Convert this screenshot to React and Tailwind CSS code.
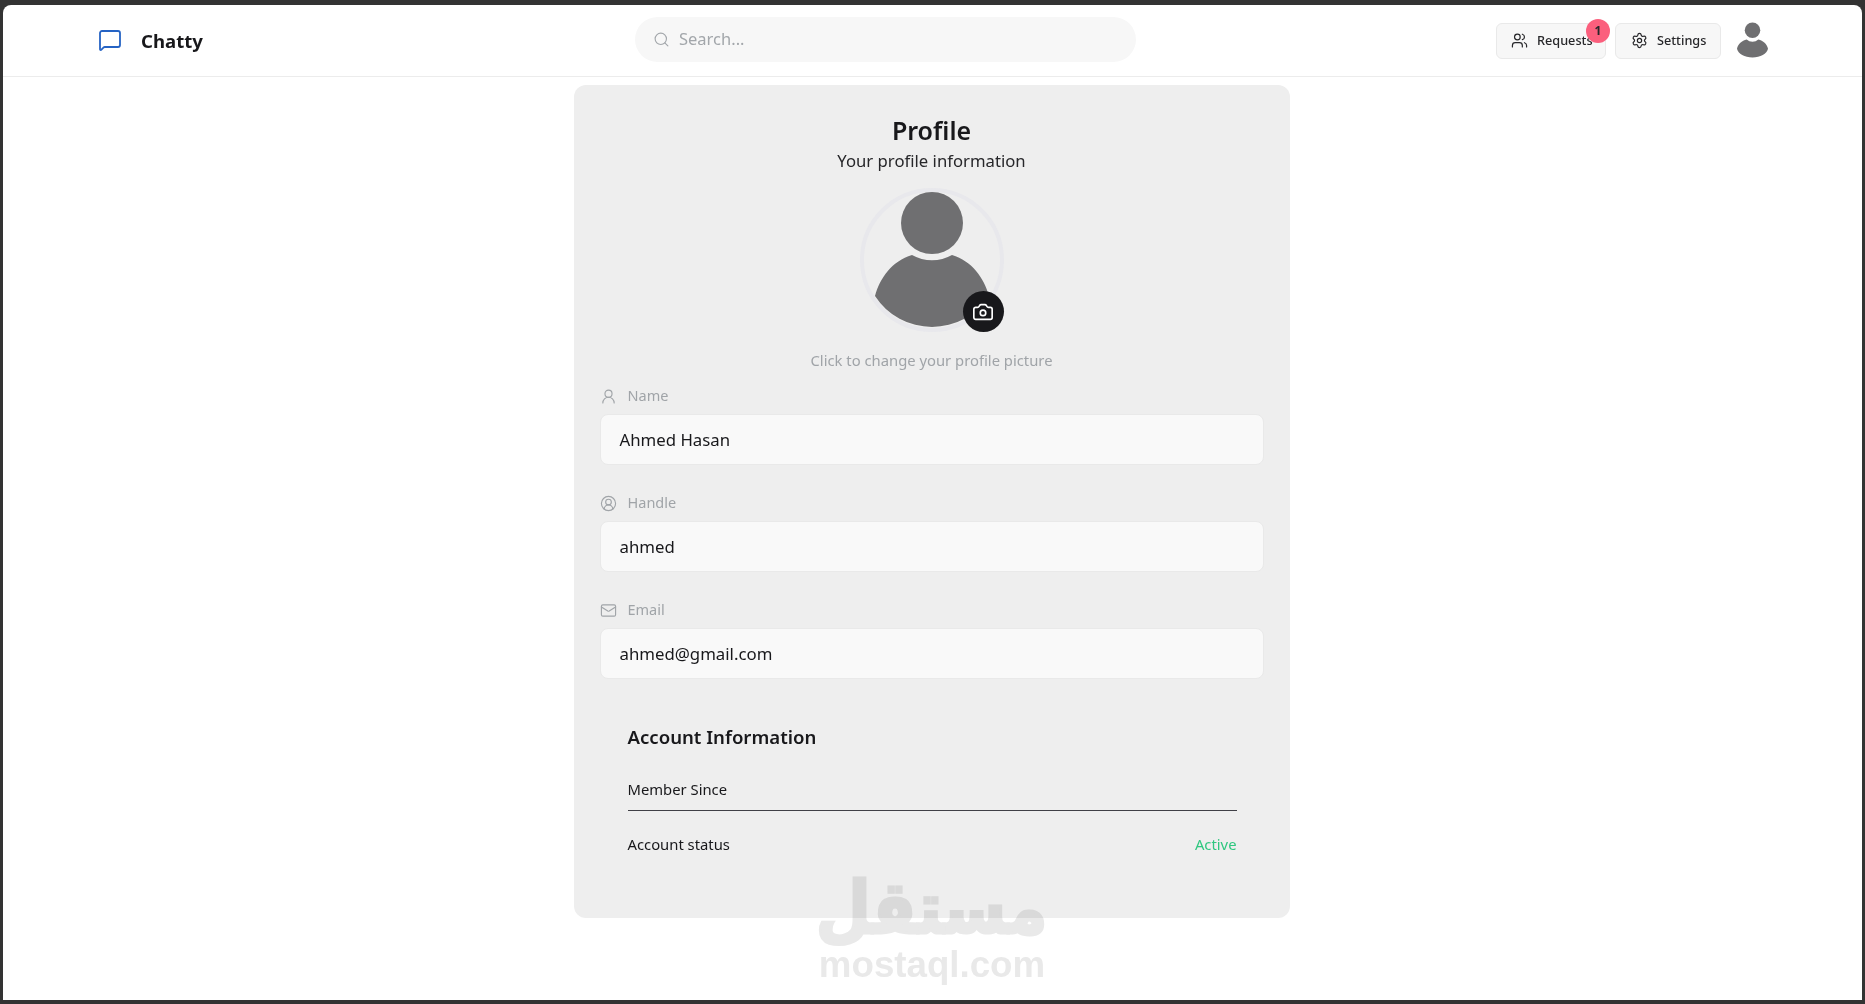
import React from 'react';
import { Camera, CircleUserRound, Mail, MessageSquare, Search, Settings, UserRound, Users } from 'lucide-react';

const PersonIcon = ({ className }) => (
  <svg className={className} viewBox="0 0 144 144" fill="#6f6f71">
    <circle cx="72" cy="35" r="31" />
    <path d="M52 67A41 41 0 0 0 92 67C112 73 124 90 129 108A68 68 0 0 1 15 108C20 90 32 73 52 67Z" />
  </svg>
);

const Field = ({ icon: Icon, label, value, className }) => (
  <div className={className}>
    <div className="flex items-center gap-[11px] h-5 text-[14.5px] text-[#a0a4a8]">
      <Icon className="w-[17px] h-[17px]" strokeWidth={1.6} />
      <span>{label}</span>
    </div>
    <div className="mt-[8px] h-[51px] flex items-center px-[19px] rounded-lg bg-[#f9f9f9] border border-[#e9e9e9] text-[16.8px] text-[#18181b]">
      {value}
    </div>
  </div>
);

const App = () => {
  return (
    <div className="relative h-screen overflow-hidden bg-[#333333] pt-[5px] px-[3px] pb-[4px] font-['Noto_Sans','Open_Sans',sans-serif]">
      <div className="h-full bg-white rounded-t-lg flex flex-col">
        <header className="h-[72px] shrink-0 flex items-center border-b border-[#ececec]">
          <div className="w-[632px] flex items-center pl-[95px]">
            <MessageSquare className="w-6 h-6 -mt-[1px] text-[#2563c4]" strokeWidth={1.8} />
            <span className="ml-[19px] mt-[1px] text-[18.6px] font-bold text-[#18181b]">Chatty</span>
          </div>
          <div className="w-[501px] h-[45px] -mt-[3px] rounded-full bg-[#f7f7f7] flex items-center pl-[18px] gap-[9px] text-[16.5px] text-[#a3a7ab]">
            <Search className="w-[17px] h-[17px]" strokeWidth={1.6} />
            <span className="mt-[1px]">Search...</span>
          </div>
          <div className="ml-auto flex items-center pr-[94px]">
            <button className="relative w-[110px] h-[36px] flex items-center pl-[14px] gap-[9px] rounded-md bg-[#f7f7f7] border border-[#e9e9e9] text-[12.7px] font-medium text-[#27272a]">
              <Users className="w-[17px] h-[17px] -mt-[1px]" strokeWidth={1.7} />
              <span className="mt-[1px]">Requests</span>
              <span className="absolute -top-[5px] right-[-5px] w-6 h-6 rounded-full bg-[#fb5f7d] flex items-center justify-center text-[12px] font-bold text-[#27272a]">1</span>
            </button>
            <button className="ml-[9px] w-[106px] h-[36px] flex items-center pl-[15px] gap-[9px] rounded-md bg-[#f7f7f7] border border-[#e9e9e9] text-[12.7px] font-medium text-[#27272a]">
              <Settings className="w-[17px] h-[17px] -mt-[1px]" strokeWidth={1.7} />
              <span className="mt-[1px]">Settings</span>
            </button>
            <svg className="ml-[16px] -mt-[2px] w-[31px] h-[36px]" viewBox="0 0 32 36" fill="#6f6f71">
              <circle cx="16" cy="8" r="8" />
              <path d="M10 17.500A9 9 0 0 0 22 17.500C27 19 31 22 32 27C31 32 24 36 16 36C8 36 1 32 0 27C1 22 5 19 10 17.500Z" />
            </svg>
          </div>
        </header>

        <main className="flex-1 flex justify-center items-start">
          <section className="w-[716px] h-[833px] mt-[8px] mr-[2px] rounded-xl bg-[#eeeeee] px-[26px] pt-[27px]">
            <div className="text-center">
              <h1 className="text-[25px] leading-[36px] font-semibold text-[#18181b]">Profile</h1>
              <p className="mt-[1px] text-[16.7px] leading-[24px] text-[#27272a]">Your profile information</p>
            </div>
            <div className="relative mx-auto mt-[15px] w-[144px] h-[144px] rounded-full border-[4px] border-[#e8e8ec]">
              <PersonIcon className="absolute -inset-[4px] w-[144px] h-[144px]" />
              <button className="absolute left-[99px] top-[99px] w-[41px] h-[41px] rounded-full bg-[#18181b] flex items-center justify-center">
                <Camera className="w-[22px] h-[22px] text-white" strokeWidth={1.8} />
              </button>
            </div>
            <p className="mt-[17px] text-center text-[14.8px] leading-[22px] text-[#a0a4a8]">Click to change your profile picture</p>

            <Field icon={UserRound} label="Name" value="Ahmed Hasan" className="mt-[15px]" />
            <Field icon={CircleUserRound} label="Handle" value="ahmed" className="mt-[28px]" />
            <Field icon={Mail} label="Email" value="ahmed@gmail.com" className="mt-[28px]" />

            <div className="pl-[28px] pr-[27px] mt-[44px]">
              <h2 className="text-[18.6px] leading-[28px] font-semibold text-[#18181b]">Account Information</h2>
              <div className="mt-[27px] h-[33px] border-b border-[#3f3f46] text-[14.8px] leading-[22px] text-[#18181b]">Member Since</div>
              <div className="mt-[22px] flex justify-between text-[14.8px] leading-[22px] text-[#18181b]">
                <span>Account status</span>
                <span className="text-[#2fc77f]">Active</span>
              </div>
            </div>
          </section>
        </main>
      </div>

      {/* mostaql watermark */}
      <div className="absolute left-[819px] top-[873px] w-[226px] flex flex-col items-center text-[#e9e9e9] mix-blend-multiply pointer-events-none">
        <span dir="rtl" className="font-['DejaVu_Sans',sans-serif] font-bold text-[72px] leading-[70px] scale-x-[.88] [-webkit-text-stroke:3px_#e9e9e9]">مستقل</span>
        <span className="mt-[2px] font-['Liberation_Sans',sans-serif] font-bold text-[36.7px] leading-[40px]">mostaql.com</span>
      </div>
    </div>
  );
};

export default App;
